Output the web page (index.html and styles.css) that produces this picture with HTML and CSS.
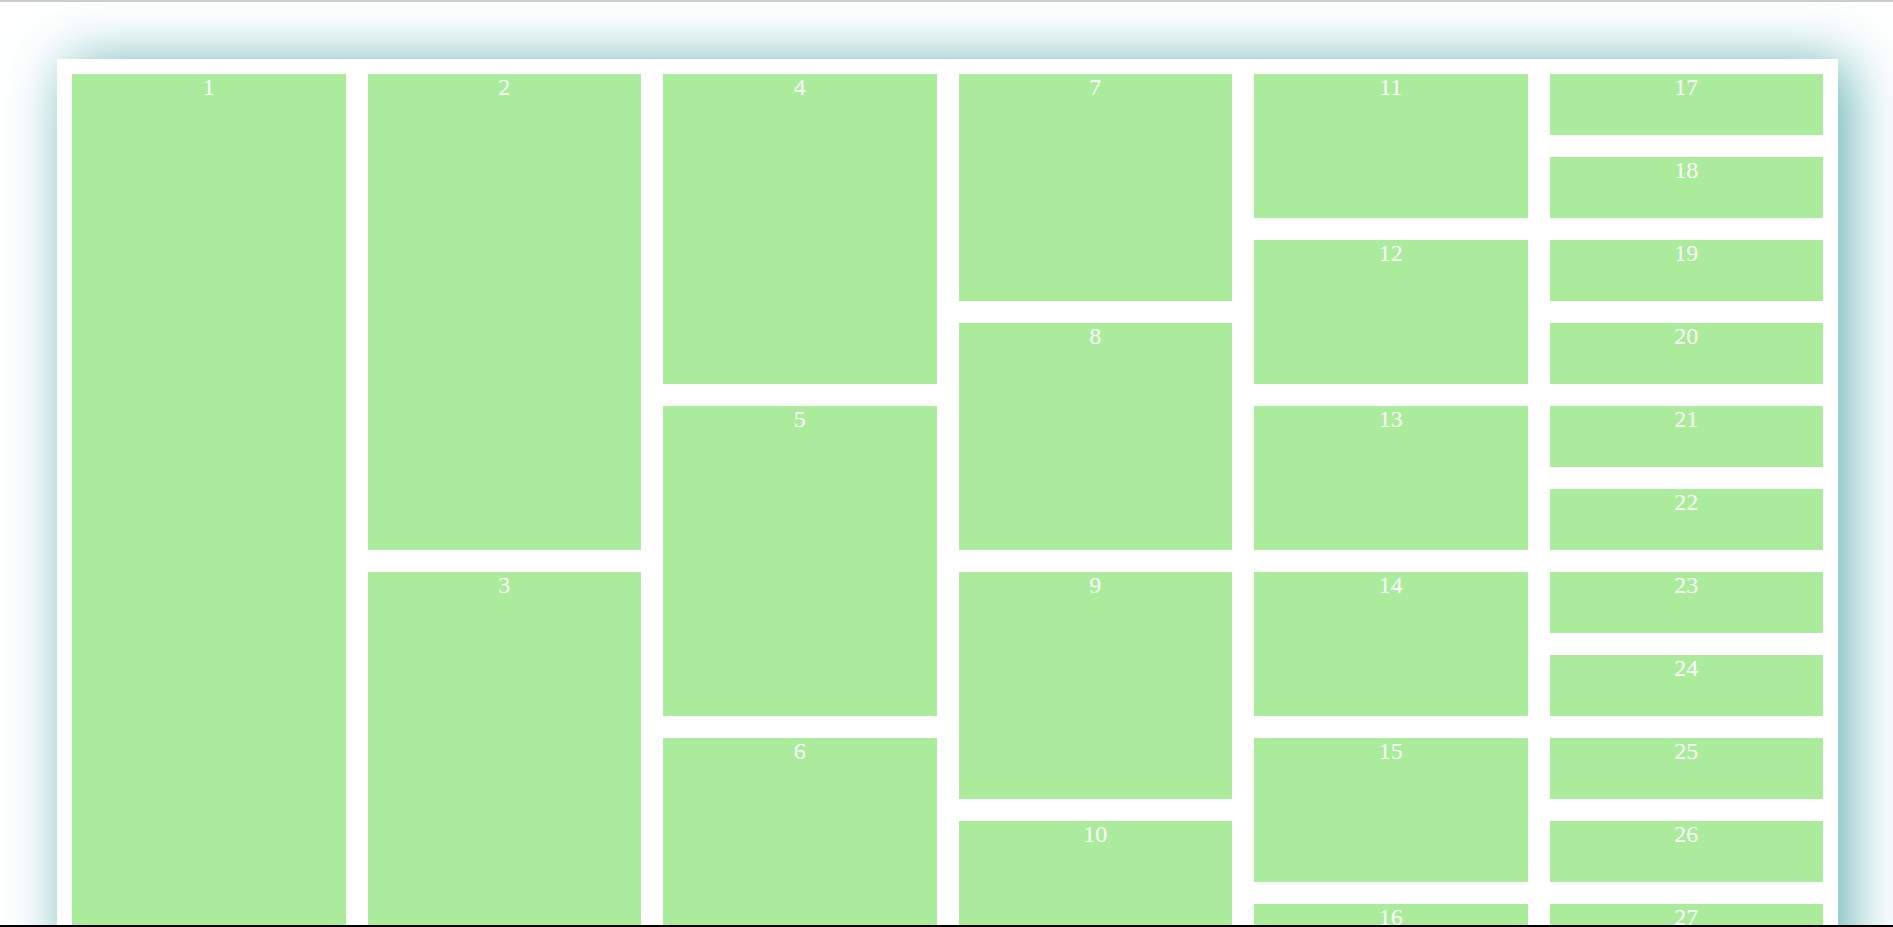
FILE: index.html
```html
<!DOCTYPE html>
<html>
<head>
<meta charset="utf-8">
<link rel="stylesheet" href="styles.css">
</head>
<body>
<div class="topline"></div>
<div class="board">
  <div class="grid">
    <div class="cell c1 s12">1</div>
    <div class="cell c2 s6">2</div>
    <div class="cell c2 s6">3</div>
    <div class="cell c3 s4">4</div>
    <div class="cell c3 s4">5</div>
    <div class="cell c3 s4">6</div>
    <div class="cell c4 s3">7</div>
    <div class="cell c4 s3">8</div>
    <div class="cell c4 s3">9</div>
    <div class="cell c4 s3">10</div>
    <div class="cell c5 s2">11</div>
    <div class="cell c5 s2">12</div>
    <div class="cell c5 s2">13</div>
    <div class="cell c5 s2">14</div>
    <div class="cell c5 s2">15</div>
    <div class="cell c5 s2">16</div>
    <div class="cell c6">17</div>
    <div class="cell c6">18</div>
    <div class="cell c6">19</div>
    <div class="cell c6">20</div>
    <div class="cell c6">21</div>
    <div class="cell c6">22</div>
    <div class="cell c6">23</div>
    <div class="cell c6">24</div>
    <div class="cell c6">25</div>
    <div class="cell c6">26</div>
    <div class="cell c6">27</div>
    <div class="cell c6">28</div>
  </div>
</div>
<div class="bottomline"></div>
</body>
</html>
```

FILE: styles.css
```css
html, body {
  margin: 0;
  padding: 0;
  background: #ffffff;
  font-family: "Liberation Serif", "Times New Roman", serif;
}
body {
  padding: 59px 55px 60px 57px;
}
.topline {
  position: fixed;
  top: 0;
  left: 0;
  right: 0;
  height: 2px;
  background: #cccccc;
  z-index: 5;
}
.bottomline {
  position: fixed;
  bottom: 0;
  left: 0;
  right: 0;
  height: 2px;
  background: #000000;
  z-index: 5;
}
.board {
  background: #ffffff;
  padding: 15px;
  box-shadow: 10px 4px 55px #5fb0b0;
}
.grid {
  display: grid;
  grid-template-columns: repeat(6, 1fr);
  grid-template-rows: repeat(12, 61px);
  grid-auto-flow: column;
  gap: 22px;
}
.cell {
  background: #aaeb9c;
  color: #ffffff;
  font-size: 24px;
  text-align: center;
  line-height: normal;
}
.c1 { grid-column: 1; }
.c2 { grid-column: 2; }
.c3 { grid-column: 3; }
.c4 { grid-column: 4; }
.c5 { grid-column: 5; }
.c6 { grid-column: 6; }
.s12 { grid-row: span 12; }
.s6 { grid-row: span 6; }
.s4 { grid-row: span 4; }
.s3 { grid-row: span 3; }
.s2 { grid-row: span 2; }
```
